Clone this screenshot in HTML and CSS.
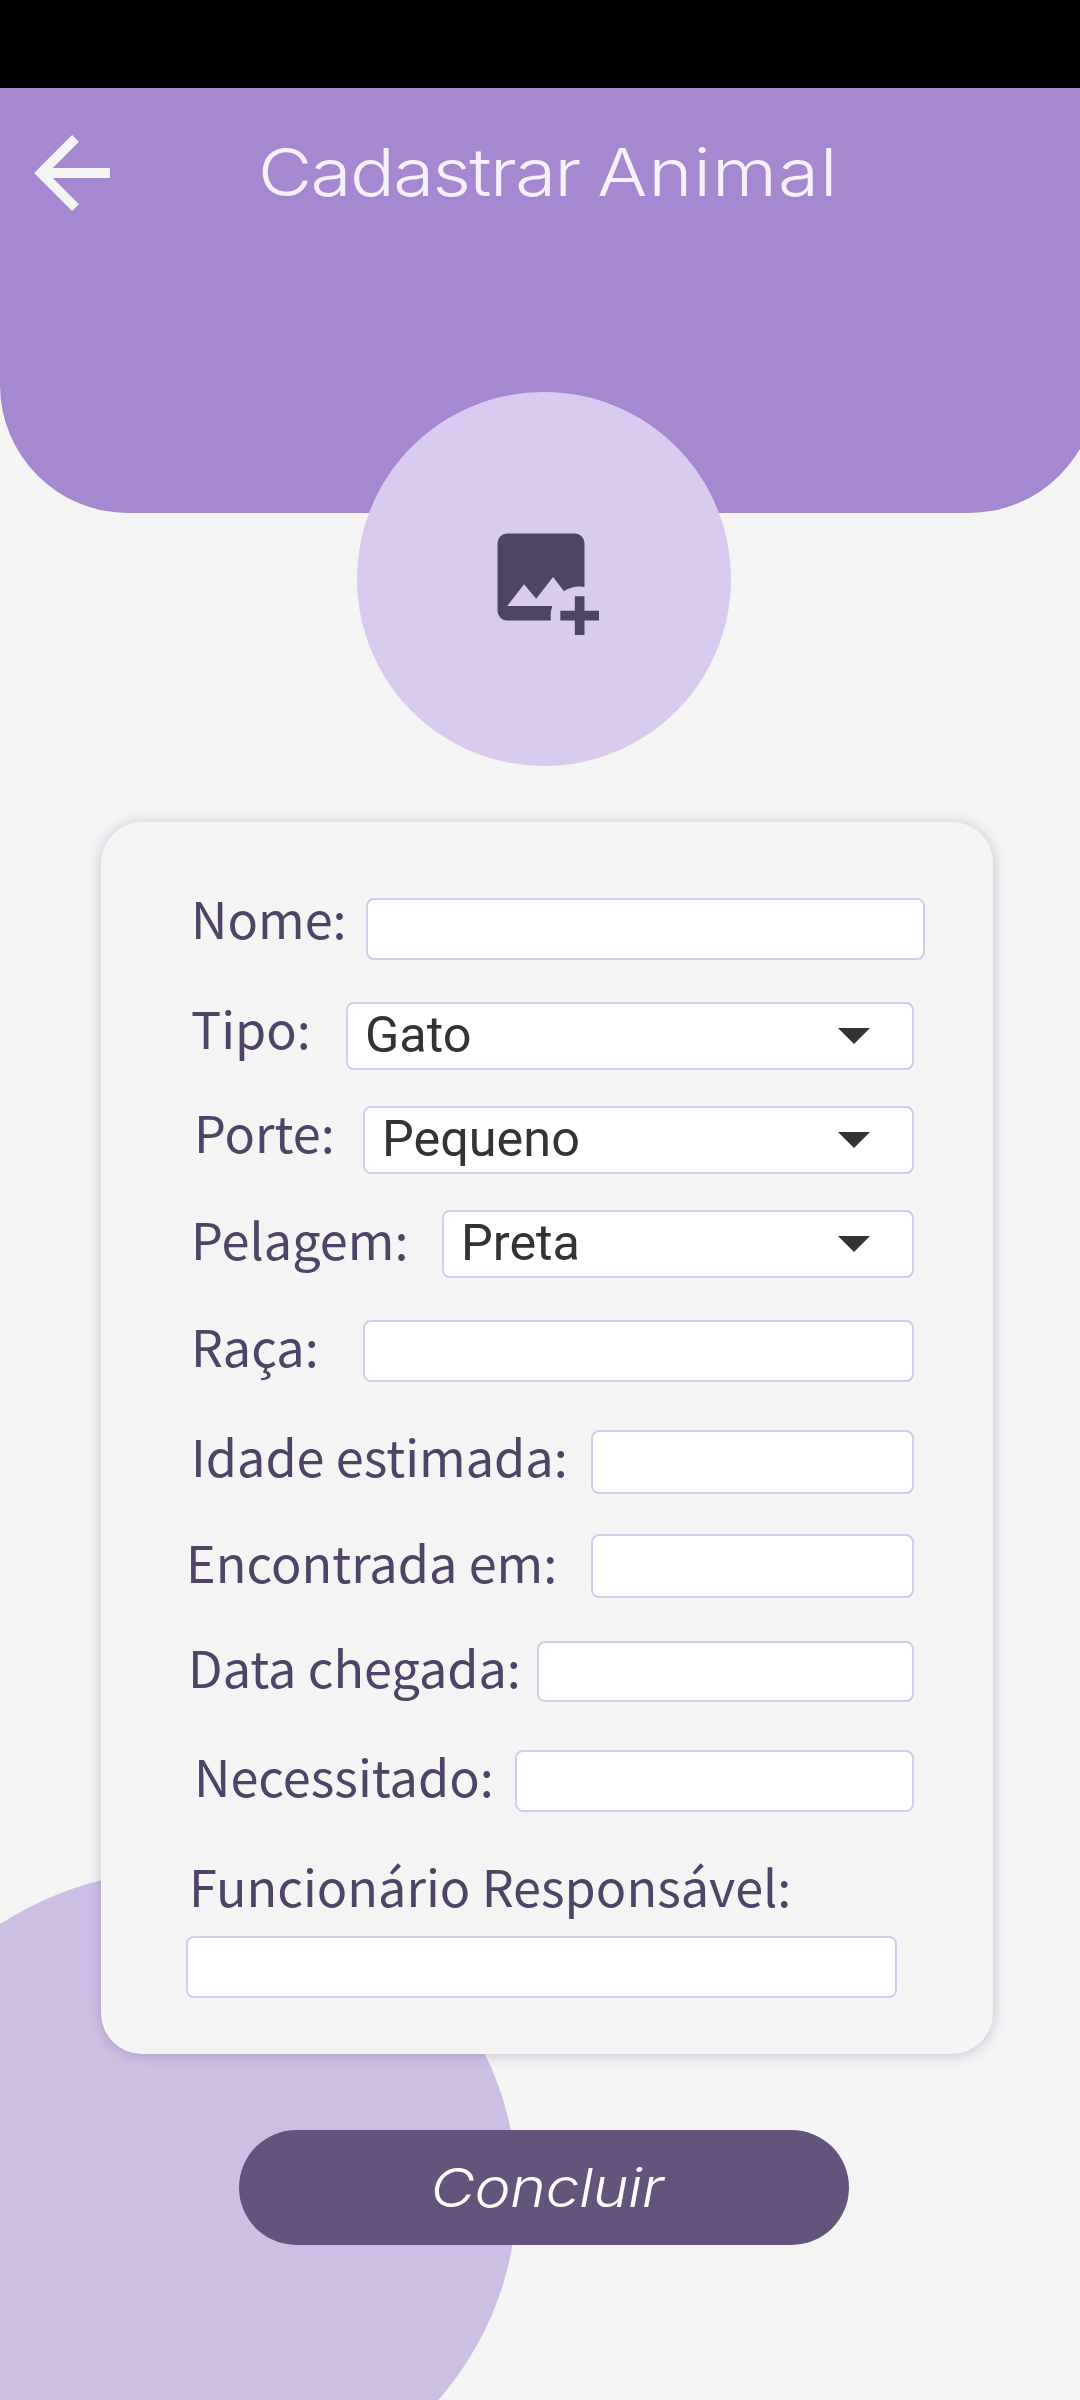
FILE: index.html
```html
<!DOCTYPE html>
<html lang="pt-BR">
<head>
<meta charset="utf-8">
<title>Cadastrar Animal</title>
<link rel="stylesheet" href="styles.css">
</head>
<body>
<div class="screen">
  <div class="blob"></div>
  <div class="statusbar"></div>
  <header class="header">
    <svg class="back" viewBox="0 0 76.2 76.4" role="img" aria-label="Voltar"><path d="M0 38.2 38.2 0 45 6.8 18.8 33.2H76.2V43.2H18.8L45 69.6 38.2 76.4Z"/></svg>
    <h1 class="title">Cadastrar <span class="title-wide">Animal</span></h1>
  </header>
  <div class="photo">
    <svg class="photo-icon" viewBox="0 0 24 24"><path d="M5 3H19A2 2 0 0 1 21 5V14.08A6 6 0 0 0 16.75 14.95L14.5 12 11 16.5 8.5 13.5 5 18H14.34A6 6 0 0 0 14.08 21H5A2 2 0 0 1 3 19V5A2 2 0 0 1 5 3ZM19 16H21V19H24V21H21V24H19V21H16V19H19Z"/></svg>
  </div>
  <form class="card">
    <div class="row row-nome"><label class="label">Nome:</label><input class="field"></div>
    <div class="row row-tipo"><label class="label">Tipo:</label><div class="field select"><span>Gato</span><i class="caret"></i></div></div>
    <div class="row row-porte"><label class="label">Porte:</label><div class="field select"><span>Pequeno</span><i class="caret"></i></div></div>
    <div class="row row-pelagem"><label class="label">Pelagem:</label><div class="field select"><span>Preta</span><i class="caret"></i></div></div>
    <div class="row row-raca"><label class="label">Raça:</label><input class="field"></div>
    <div class="row row-idade"><label class="label">Idade estimada:</label><input class="field"></div>
    <div class="row row-encontrada"><label class="label">Encontrada em:</label><input class="field"></div>
    <div class="row row-data"><label class="label">Data chegada:</label><input class="field"></div>
    <div class="row row-necessitado"><label class="label">Necessitado:</label><input class="field"></div>
    <div class="row row-resp"><label class="label">Funcionário Responsável:</label><input class="field"></div>
  </form>
  <button class="submit"><span class="submit-text">Concluir</span></button>
</div>
</body>
</html>
```
FILE: styles.css
```css
* { box-sizing: border-box; }
body { margin: 0; background: #f4f4f4; }
.screen {
  position: relative;
  width: 1080px;
  height: 2400px;
  overflow: hidden;
  background: #f4f4f4;
}
.blob {
  position: absolute;
  left: -148px;
  top: 1870px;
  width: 665px;
  height: 644px;
  border-radius: 50%;
  background: #cdbfe4;
}
.statusbar { height: 88px; background: #000; }
.header {
  display: flex;
  align-items: flex-start;
  width: 1097px;
  height: 425px;
  padding: 47px 0 0 34px;
  border-radius: 0 0 128px 128px;
  background: #a688d0;
}
.back { flex: none; width: 76px; height: 76px; fill: #f4f4f4; }
.title {
  margin: 0 0 0 148px;
  font: 280 66px/74px Inter, sans-serif;
  letter-spacing: -1.4px;
  word-spacing: -1.6px;
  white-space: nowrap;
  color: #f6f0fc;
  transform: scaleX(1.128);
  transform-origin: left;
}
.title-wide { letter-spacing: 1px; }
.photo {
  position: relative;
  display: grid;
  place-items: center;
  width: 374px;
  height: 374px;
  margin: -121px 0 0 357px;
  padding: 0 6px 4px 0;
  border-radius: 50%;
  background: #d9cbef;
}
.photo-icon { width: 116px; height: 116px; fill: #4f4466; }
.card {
  position: relative;
  width: 892px;
  height: 1232px;
  margin: 56px 0 0 101px;
  padding: 76px 79px 0 85px;
  border-radius: 41px;
  background: #f4f4f4;
  box-shadow: 0 1px 14px rgba(96, 50, 130, .28);
}
.row {
  display: flex;
  align-items: flex-start;
  justify-content: space-between;
  padding-left: 5px;
}
.label {
  font: 400 50.4px/52px "Noto Sans CJK SC", sans-serif;
  white-space: nowrap;
  color: #4f4466;
}
.field {
  flex: none;
  height: 62px;
  padding: 0;
  border: 2px solid #d7cbec;
  border-radius: 8px;
  background: #fff;
  outline: none;
}
.select {
  display: flex;
  justify-content: space-between;
  height: 68px;
  padding: 0 42px 0 17px;
  font: 400 50.4px/61px Roboto, sans-serif;
  color: #333;
}
.caret {
  margin-top: 24px;
  width: 32px;
  height: 16px;
  background: #333;
  clip-path: polygon(0 0, 100% 0, 50% 100%);
}
.row-nome { margin: 0 -11px 42px 0; }
.row-nome .label { margin-top: -6px; }
.row-nome .field { width: 559px; }
.row-tipo { margin-bottom: 36px; }
.row-tipo .field { width: 568px; }
.row-porte { margin-bottom: 36px; padding-left: 8px; }
.row-porte .field { width: 551px; }
.row-pelagem { margin-bottom: 42px; }
.row-pelagem .label { margin-top: 3px; }
.row-pelagem .field { width: 472px; }
.row-raca { margin-bottom: 48px; }
.row-raca .field { width: 551px; }
.row-idade { margin-bottom: 40px; }
.row-idade .field, .row-encontrada .field { width: 323px; height: 64px; }
.row-encontrada { margin-bottom: 43px; padding-left: 0; }
.row-encontrada .label { margin-top: 2px; }
.row-data { margin-bottom: 48px; padding-left: 2px; }
.row-data .field { width: 377px; height: 61px; }
.row-necessitado { margin-bottom: 48px; padding-left: 8px; }
.row-necessitado .field { width: 399px; }
.row-resp { display: grid; justify-content: start; padding-left: 0; }
.row-resp .label { height: 76px; padding-left: 3px; }
.row-resp .field { width: 711px; }
.submit {
  position: relative;
  display: block;
  width: 610px;
  height: 115px;
  margin: 76px 0 0 239px;
  padding: 0 0 0 6px;
  border: 0;
  border-radius: 58px;
  background: #64537b;
  font: italic 280 54px/115px Inter, sans-serif;
  letter-spacing: -0.5px;
  color: #fff;
}
.submit-text {
  display: inline-block;
  transform: scaleX(1.13);
}
```
